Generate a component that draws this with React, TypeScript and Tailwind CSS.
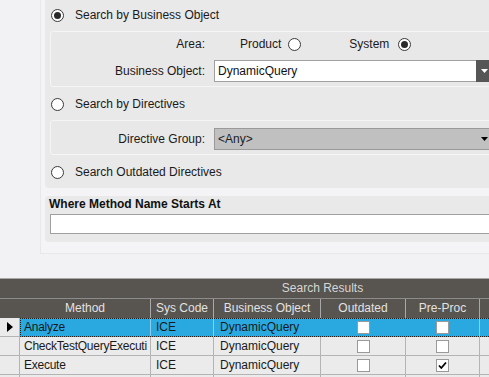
import React from 'react'

const cols = 'grid grid-cols-[20px_131px_63px_107px_85px_74px_165px]'

function Radio({ checked }: { checked?: boolean }) {
  return (
    <span className="flex h-[13px] w-[13px] shrink-0 items-center justify-center rounded-full border border-[#3a3a3a] bg-white">
      {checked && <span className="h-[7px] w-[7px] rounded-full bg-[#2a2a2a]" />}
    </span>
  )
}

function RadioRow({ label, checked }: { label: string; checked?: boolean }) {
  return (
    <div className="flex h-[20px] items-center gap-[11px] pl-[1px]">
      <Radio checked={checked} />
      <span>{label}</span>
    </div>
  )
}

function Check({ checked }: { checked?: boolean }) {
  return (
    <div className="flex h-full items-center justify-center">
      <span className="flex h-[13px] w-[13px] items-center justify-center border border-[#9a9a9a] bg-white">
        {checked && (
          <svg width="9" height="9" viewBox="0 0 9 9">
            <path d="M1 4.5 L3.3 7 L8 1.5" fill="none" stroke="#000" strokeWidth="1.8" />
          </svg>
        )}
      </span>
    </div>
  )
}

// the grid's last row is only peeking in at the bottom edge
const rows = [
  { method: 'Analyze', sys: 'ICE', bo: 'DynamicQuery', selected: true, pre: false, box: true },
  { method: 'CheckTestQueryExecuti', sys: 'ICE', bo: 'DynamicQuery', selected: false, pre: false, box: true },
  { method: 'Execute', sys: 'ICE', bo: 'DynamicQuery', selected: false, pre: true, box: true },
  { method: '', sys: '', bo: '', selected: false, pre: false, box: false },
]

export default function App() {
  return (
    <div className="h-[377px] w-[489px] overflow-hidden bg-[#f2f2f4] font-['Liberation_Sans',Arial,sans-serif] text-[12px] text-[#1a1a1a]">
      <div className="ml-[40px] w-[620px] border-b border-l border-[#e8e8ea] bg-[#f4f4f6] pb-[11px] pl-[4px]">
        <div className="rounded-bl-[4px] bg-[#e9e9e9] pb-[6px] pl-[5px] pt-[5px]">
          <RadioRow label="Search by Business Object" checked />
          <div className="mt-[6px] rounded-[3px] border border-[#f5f5f5] bg-[#e8e8e8] pb-[4px] pt-[2px]">
            <div className="flex h-[20px] items-center">
              <span className="w-[154px] text-right">Area:</span>
              <span className="ml-[35px]">Product</span>
              <span className="ml-[7px]"><Radio /></span>
              <span className="ml-[48px]">System</span>
              <span className="ml-[9px]"><Radio checked /></span>
            </div>
            <div className="mt-[6px] flex h-[22px] items-center">
              <span className="w-[154px] text-right">Business Object:</span>
              <div className="ml-[9px] flex h-[22px] w-[278px]">
                <div className="flex flex-1 items-center border-y border-l border-[#a0a0a0] bg-white pl-[3px] text-[#111]">
                  DynamicQuery
                </div>
                <div className="flex w-[16px] items-center justify-center bg-[#565656]">
                  <svg width="7" height="4" viewBox="0 0 7 4">
                    <path d="M0 0 H7 L3.5 4 Z" fill="#fff" />
                  </svg>
                </div>
              </div>
            </div>
          </div>
          <div className="mt-[7px]">
            <RadioRow label="Search by Directives" />
          </div>
          <div className="mt-[6px] rounded-[3px] border border-[#f5f5f5] bg-[#e8e8e8] pb-[4px] pt-[7px]">
            <div className="flex h-[22px] items-center">
              <span className="w-[154px] text-right">Directive Group:</span>
              <div className="ml-[9px] flex h-[22px] w-[278px] items-center border-y border-l border-[#9a9a9a] bg-[#c0c0c0]">
                <span className="flex-1 pl-[3px] text-[#222]">&lt;Any&gt;</span>
                <span className="flex w-[16px] justify-center">
                  <svg width="7" height="4" viewBox="0 0 7 4">
                    <path d="M0 0 H7 L3.5 4 Z" fill="#000" />
                  </svg>
                </span>
              </div>
            </div>
          </div>
          <div className="mt-[7px]">
            <RadioRow label="Search Outdated Directives" />
          </div>
        </div>
        <div className="mt-[8px] rounded-l-[4px] bg-[#e9e9e9] pb-[8px] pl-[4px] pt-[1px]">
          <div className="font-bold leading-[14px] text-[#111]">Where Method Name Starts At</div>
          <div className="ml-[1px] mt-[3px] h-[20px] border border-[#a0a0a0] bg-white" />
        </div>
      </div>

      <div className="mt-[24px] w-[645px] border-t border-[#a8a8a8]">
        <div className="h-[19px] bg-[#58544f] text-center leading-[19px] text-[#d6d6d6]">Search Results</div>
        <div className={`${cols} h-[20px] border-t border-[#8c8c8c] bg-[#58544f] text-[#e2e2e2]`}>
          {['', 'Method', 'Sys Code', 'Business Object', 'Outdated', 'Pre-Proc', ''].map((h, i) => (
            <div key={i} className={`text-center leading-[19px] ${i > 0 ? 'border-r border-[#a8a8a8]' : ''}`}>
              {h}
            </div>
          ))}
        </div>
        {rows.map((r, idx) => {
          const line = r.selected ? 'border-[#8fcdea]' : 'border-b border-[#b4b4b4]'
          const soft = r.selected ? 'border-[#29a9e0]' : 'border-b border-[#b4b4b4]'
          return (
            <div key={idx} className="flex h-[19px]">
              <div className="flex w-[20px] shrink-0 items-center border-b border-r border-[#b4b4b4] bg-[#ebebeb] pl-[7px]">
                {r.selected && (
                  <svg width="6" height="10" viewBox="0 0 6 10">
                    <path d="M0 0 L6 5 L0 10 Z" fill="#000" />
                  </svg>
                )}
              </div>
              <div
                className={`grid grid-cols-[131px_63px_107px_85px_74px_165px] ${
                  r.selected ? 'bg-[#29a9e0] outline-1 -outline-offset-1 outline-dotted outline-[#222]' : 'bg-[#ebebeb]'
                }`}
              >
                <div className={`overflow-hidden whitespace-nowrap border-r pl-[4px] leading-[18px] tracking-[-0.25px] ${line}`}>{r.method}</div>
                <div className={`border-r pl-[5px] leading-[18px] ${line}`}>{r.sys}</div>
                <div className={`overflow-hidden whitespace-nowrap border-r pl-[6px] leading-[18px] ${soft}`}>{r.bo}</div>
                <div className={`border-r ${soft}`}>{r.box && <Check />}</div>
                <div className={`border-r ${line}`}>{r.box && <Check checked={r.pre} />}</div>
                <div className={`border-r ${line}`} />
              </div>
            </div>
          )
        })}
      </div>
    </div>
  )
}
